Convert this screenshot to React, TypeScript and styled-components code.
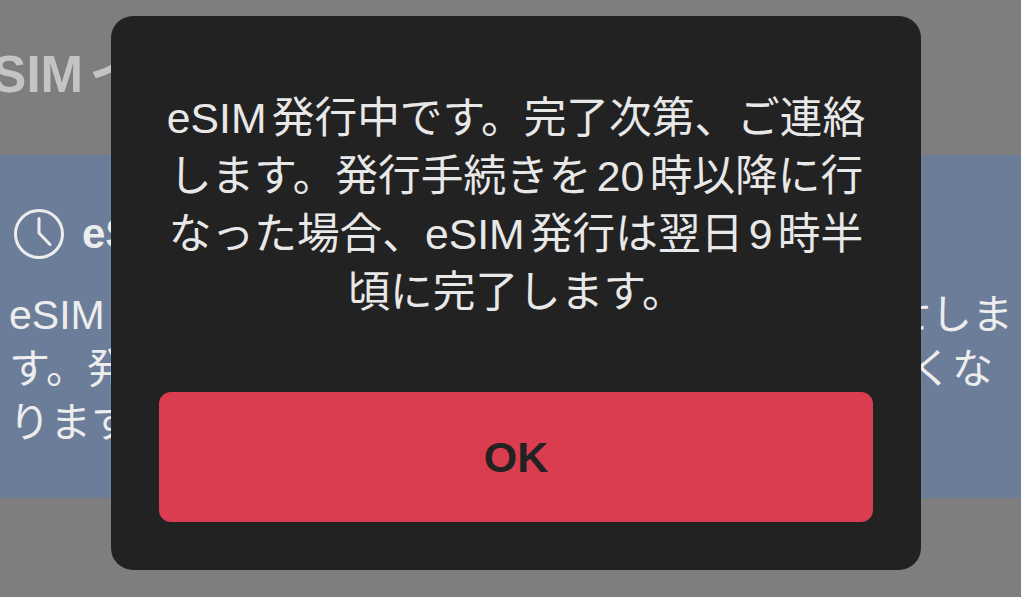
import React from 'react';
import styled, { createGlobalStyle } from 'styled-components';

const GlobalStyle = createGlobalStyle`
  html, body {
    margin: 0;
    padding: 0;
    height: 100%;
    overflow: hidden;
    background: #7e7e7e;
  }
  #root {
    height: 100%;
  }
`;

const fontStack = `"Liberation Sans", "Noto Sans CJK JP", sans-serif`;

const Page = styled.div`
  width: 1021px;
  height: 597px;
  overflow: hidden;
  background: #7e7e7e;
  font-family: ${fontStack};
  text-autospace: normal;
`;

const Heading = styled.h1`
  margin: 0 0 0 -36px;
  height: 155px;
  padding: 46px 0 0;
  box-sizing: border-box;
  font-size: 51px;
  line-height: 58px;
  font-weight: 700;
  color: #c4c4c4;
  white-space: nowrap;
`;

const Notice = styled.section`
  height: 343px;
  box-sizing: border-box;
  padding: 54px 8px 0 14px;
  background: #6c7d9a;
  color: #ededed;
`;

const NoticeHeader = styled.div`
  display: flex;
  align-items: center;
  gap: 18px;
  height: 50px;
`;

const NoticeTitle = styled.span`
  font-size: 42px;
  font-weight: 700;
  white-space: nowrap;
`;

const NoticeBody = styled.div`
  margin: 29px 0 0 -5px;
  font-size: 41px;
  line-height: 54px;
`;

const NoticeLine = styled.div`
  display: flex;
  justify-content: space-between;
  white-space: nowrap;
`;

const NoticeTail = styled.span`
  margin-right: 20px;
`;

const Overlay = styled.div`
  position: fixed;
  inset: 0;
  display: flex;
  justify-content: center;
  padding: 16px 100px 0 111px;
  box-sizing: border-box;
`;

const Dialog = styled.div`
  width: 810px;
  height: 554px;
  box-sizing: border-box;
  padding: 73px 48px 48px;
  display: flex;
  flex-direction: column;
  background: #222222;
  border-radius: 22px;
`;

const Message = styled.p`
  margin: 0;
  height: 303px;
  font-size: 42.7px;
  line-height: 58px;
  color: #e8e8e8;
  text-align: center;
`;

const OkButton = styled.button`
  height: 130px;
  border: 0;
  border-radius: 12px;
  background: #db3d50;
  color: #222222;
  font-family: inherit;
  font-size: 43px;
  font-weight: 700;
`;

const ClockIcon = () => (
  <svg width="50" height="50" viewBox="0 0 50 50" fill="none" stroke="#ededed" strokeWidth="3" strokeLinecap="round" strokeLinejoin="round">
    <circle cx="25" cy="25" r="23.5" />
    <path d="M25 9.5V24L36 35.5" />
  </svg>
);

const App: React.FC = () => {
  return (
    <>
      <GlobalStyle />
      <Page>
        <Heading>eSIMイ</Heading>
        <Notice>
          <NoticeHeader>
            <ClockIcon />
            <NoticeTitle>eSIM</NoticeTitle>
          </NoticeHeader>
          <NoticeBody>
            <NoticeLine>
              <span>eSIM</span>
              <span>せしま</span>
            </NoticeLine>
            <NoticeLine>
              <span>す。発</span>
              <NoticeTail>くな</NoticeTail>
            </NoticeLine>
            <NoticeLine>
              <span>ります</span>
            </NoticeLine>
          </NoticeBody>
        </Notice>
        <Overlay>
          <Dialog>
            <Message>
              eSIM発行中です。完了次第、ご連絡します。発行手続きを20時以降に行なった場合、eSIM発行は翌日9時半頃に完了します。
            </Message>
            <OkButton>OK</OkButton>
          </Dialog>
        </Overlay>
      </Page>
    </>
  );
};

export default App;
